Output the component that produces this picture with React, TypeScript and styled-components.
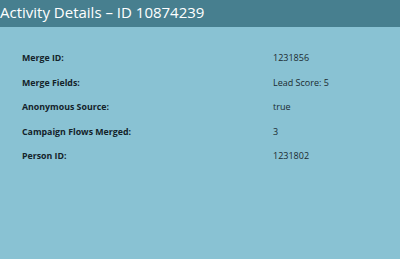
import React from "react";
import styled, { createGlobalStyle } from "styled-components";

const Global = createGlobalStyle`
  html, body { margin: 0; padding: 0; }
  body { width: 400px; height: 259px; overflow: hidden; background: #89c2d3; font-family: "Open Sans", sans-serif; }
`;

const Page = styled.div`
  width: 400px;
  height: 259px;
  background: #89c2d3;
  display: flex;
  flex-direction: column;
`;

const Header = styled.div`
  height: 27px;
  background: #477f8f;
  color: #ffffff;
  font-size: 15px;
  white-space: nowrap;
  box-sizing: border-box;
  padding-bottom: 3px;
  display: flex;
  align-items: center;
`;

const Table = styled.div`
  display: grid;
  grid-template-columns: 251px 1fr;
  padding: 19px 0 0 22px;
`;

const Label = styled.div`
  font-size: 8.8px;
  font-weight: 700;
  color: #14232a;
  height: 24.5px;
  line-height: 24.5px;
`;

const Value = styled.div`
  font-size: 9px;
  color: #1b2a30;
  height: 24.5px;
  line-height: 24.5px;
`;

const rows: [string, string][] = [
  ["Merge ID:", "1231856"],
  ["Merge Fields:", "Lead Score: 5"],
  ["Anonymous Source:", "true"],
  ["Campaign Flows Merged:", "3"],
  ["Person ID:", "1231802"],
];

export default function App() {
  return (
    <Page>
      <Global />
      <Header>Activity Details – ID 10874239</Header>
      <Table>
        {rows.map(([l, v]) => (
          <React.Fragment key={l}>
            <Label>{l}</Label>
            <Value>{v}</Value>
          </React.Fragment>
        ))}
      </Table>
    </Page>
  );
}
